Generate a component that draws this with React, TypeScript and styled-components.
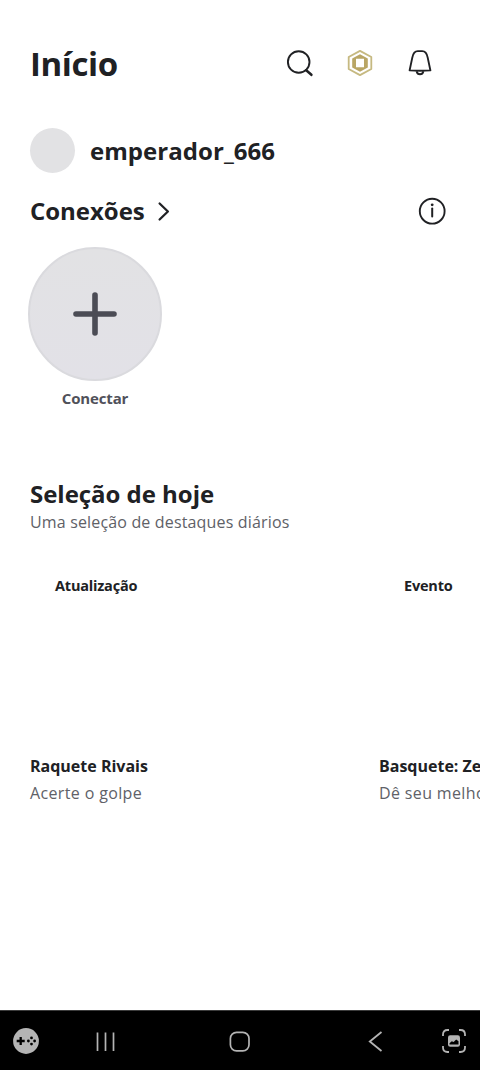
import React from "react";
import styled, { createGlobalStyle } from "styled-components";

const GlobalStyle = createGlobalStyle`
  * {
    box-sizing: border-box;
  }
  body {
    margin: 0;
    background: #fff;
    font-family: "Open Sans", "Noto Sans", sans-serif;
    color: #202124;
  }
  svg {
    display: block;
  }
`;

const Screen = styled.div`
  width: 100%;
  max-width: 480px;
  height: 1070px;
  display: flex;
  flex-direction: column;
  overflow: hidden;
  background: #fff;
`;

const Content = styled.main`
  flex: 1;
  min-height: 0;
  padding-left: 30px;
`;

const Header = styled.header`
  height: 128px;
  display: flex;
  align-items: center;
  justify-content: space-between;
  padding-right: 45px;
`;

const Title = styled.h1`
  margin: 0;
  font-size: 33px;
  line-height: 40px;
  font-weight: 700;
  letter-spacing: -0.4px;
  white-space: nowrap;
`;

const HeaderActions = styled.div`
  display: flex;
  gap: 30px;
`;

const IconButton = styled.button`
  width: 30px;
  height: 30px;
  padding: 0;
  border: 0;
  background: none;
  color: #202124;
`;

const Profile = styled.div`
  height: 45px;
  display: flex;
  align-items: center;
  gap: 15px;
`;

const Avatar = styled.div`
  width: 45px;
  height: 45px;
  border-radius: 50%;
  background: #e2e2e4;
`;

const Username = styled.span`
  font-size: 24px;
  line-height: 32px;
  font-weight: 700;
  letter-spacing: 0.05px;
`;

const ConnectionsBar = styled.div`
  height: 74px;
  display: flex;
  align-items: center;
  justify-content: space-between;
  padding: 2px 33px 0 0;
`;

const ConnectionsLink = styled.a`
  display: flex;
  align-items: center;
  gap: 11px;
`;

const SectionTitle = styled.h2`
  margin: 0;
  font-size: 24px;
  line-height: 32px;
  font-weight: 700;
  letter-spacing: -0.03px;
  white-space: nowrap;
`;

const Connect = styled.div`
  width: 134px;
  margin-left: -2px;
  display: flex;
  flex-direction: column;
  align-items: center;
`;

const ConnectCircle = styled.div`
  width: 134px;
  height: 134px;
  border: 2px solid #dadade;
  border-radius: 50%;
  background: linear-gradient(#e2e2e4, #e2e1e7);
  display: grid;
  place-items: center;
  color: #4b4c55;
`;

const ConnectLabel = styled.span`
  margin-top: 7px;
  font-size: 15px;
  line-height: 20px;
  font-weight: 700;
  letter-spacing: -0.15px;
  color: #50515a;
`;

const Today = styled.section`
  padding-top: 70px;
`;

const Subtitle = styled.p<{ $spacing?: number }>`
  margin: 0;
  font-size: 16px;
  line-height: 24px;
  letter-spacing: ${(p) => p.$spacing ?? 0}px;
  color: #606167;
  white-space: nowrap;
`;

const Cards = styled.div`
  display: flex;
  gap: 15px;
  margin-top: 42px;
`;

const Card = styled.article`
  flex: 0 0 334px;
  height: 229px;
  display: flex;
  flex-direction: column;
`;

const Tag = styled.span`
  padding-left: 25px;
  font-size: 14.5px;
  line-height: 20px;
  font-weight: 700;
  letter-spacing: -0.2px;
`;

const CardTitle = styled.h3`
  margin: auto 0 3px;
  font-size: 16px;
  line-height: 24px;
  font-weight: 700;
  white-space: nowrap;
`;

const NavBar = styled.nav`
  height: 60px;
  flex: none;
  display: flex;
  align-items: center;
  justify-content: space-between;
  padding: 1px 13px 0;
  border-top: 1px solid #3c3c3c;
  background: #000;
  color: #b4b4b4;
`;

const NavGroup = styled.div`
  display: flex;
  gap: 53px;
`;

const SearchIcon = () => (
  <svg width="30" height="30" viewBox="0 0 30 30" fill="none" stroke="currentColor">
    <circle cx="13.7" cy="13" r="10.8" strokeWidth="1.9" />
    <path d="M21.2 21.2l5.2 4.6" strokeWidth="2.5" strokeLinecap="round" />
  </svg>
);

const RobuxIcon = () => (
  <svg width="30" height="30" viewBox="0 0 30 30" fill="none" strokeLinejoin="round">
    <path d="M15 1.900L26.300 8v12L15 26.100 3.700 20V8z" stroke="#c6b981" strokeWidth="1.8" />
    <path
      d="M15 5.200l7.800 4.400v8.800L15 22.800l-7.800-4.400V9.600zM11 9.800v8.400h8V9.800z"
      fill="#b9a665"
      fillRule="evenodd"
    />
  </svg>
);

const BellIcon = () => (
  <svg width="30" height="30" viewBox="0 0 30 30" fill="none" stroke="currentColor" strokeLinejoin="round">
    <path
      d="M4.600 21.400L7.300 8.600C8.100 4.200 9.900 2.100 12.800 2.100h4.400c2.900 0 4.700 2.100 5.500 6.500l2.700 12.800q-10.400.8-20.800 0z"
      strokeWidth="1.9"
    />
    <path d="M11.600 22.200c.5 2.200 1.700 3.100 3.400 3.100s2.900-.9 3.400-3.100" strokeWidth="1.9" />
  </svg>
);

const ChevronIcon = () => (
  <svg width="15" height="22" viewBox="0 0 15 22" fill="none" stroke="currentColor">
    <path d="M3.600 3.500l8.300 8-8.300 8" strokeWidth="2.300" strokeLinecap="round" strokeLinejoin="round" />
  </svg>
);

const InfoIcon = () => (
  <svg width="30" height="30" viewBox="0 0 30 30" fill="none" stroke="currentColor">
    <circle cx="15.200" cy="15.200" r="12.400" strokeWidth="1.9" />
    <path d="M15.200 12.400v8.200" strokeWidth="2" strokeLinecap="round" />
    <circle cx="15.200" cy="8.800" r="1.400" fill="currentColor" stroke="none" />
  </svg>
);

const PlusIcon = () => (
  <svg width="44" height="44" viewBox="0 0 44 44" stroke="currentColor">
    <path d="M22 3v38M3 22h38" strokeWidth="5.6" strokeLinecap="round" />
  </svg>
);

const GamepadIcon = () => (
  <svg width="26" height="26" viewBox="0 0 26 26">
    <circle cx="13" cy="13" r="12.9" fill="currentColor" />
    <path d="M7.7 9v8M3.7 13h8" stroke="#000" strokeWidth="2.3" />
    <g fill="#000">
      <circle cx="18.5" cy="9.9" r="1.4" />
      <circle cx="18.5" cy="16.1" r="1.4" />
      <circle cx="15.4" cy="13" r="1.4" />
      <circle cx="21.6" cy="13" r="1.4" />
    </g>
  </svg>
);

const RecentsIcon = () => (
  <svg width="26" height="26" viewBox="0 0 26 26" stroke="currentColor">
    <path d="M5.5 4.5V23M13.500 4.500V23M21.500 4.500V23" strokeWidth="1.700" />
  </svg>
);

const HomeIcon = () => (
  <svg width="26" height="26" viewBox="0 0 26 26" fill="none" stroke="currentColor">
    <rect x="3.400" y="4.300" width="18.600" height="18.600" rx="6.200" strokeWidth="1.700" />
  </svg>
);

const BackIcon = () => (
  <svg width="26" height="26" viewBox="0 0 26 26" fill="none" stroke="currentColor">
    <path d="M19.500 4L7.800 13.500l11.700 9.500" strokeWidth="1.800" />
  </svg>
);

const CaptureIcon = () => (
  <svg width="26" height="26" viewBox="0 0 26 26" fill="none" stroke="currentColor">
    <path
      d="M2 8V6.5Q2 2 6.5 2H8M18 2h1.500Q24 2 24 6.500V8M24 18v1.500Q24 24 19.500 24H18M8 24H6.500Q2 24 2 19.500V18"
      strokeWidth="1.8"
    />
    <rect x="7" y="7.200" width="12" height="11.600" rx="2.200" fill="currentColor" stroke="none" />
    <path d="M8.500 16.600v-1.400l2.300-2 1.800.8 2.600-2.400 2.300 1.600v3.400z" fill="#000" stroke="none" />
  </svg>
);

const cards = [
  { tag: "Atualização", title: "Raquete Rivais", text: "Acerte o golpe" },
  { tag: "Evento", title: "Basquete: Zero", text: "Dê seu melhor" },
];

const App: React.FC = () => {
  return (
    <>
      <GlobalStyle />
      <Screen>
        <Content>
          <Header>
            <Title>Início</Title>
            <HeaderActions>
              <IconButton aria-label="Buscar"><SearchIcon /></IconButton>
              <IconButton aria-label="Robux"><RobuxIcon /></IconButton>
              <IconButton aria-label="Notificações"><BellIcon /></IconButton>
            </HeaderActions>
          </Header>
          <Profile>
            <Avatar />
            <Username>emperador_666</Username>
          </Profile>
          <ConnectionsBar>
            <ConnectionsLink>
              <SectionTitle>Conexões</SectionTitle>
              <ChevronIcon />
            </ConnectionsLink>
            <IconButton aria-label="Informações"><InfoIcon /></IconButton>
          </ConnectionsBar>
          <Connect>
            <ConnectCircle><PlusIcon /></ConnectCircle>
            <ConnectLabel>Conectar</ConnectLabel>
          </Connect>
          <Today>
            <SectionTitle>Seleção de hoje</SectionTitle>
            <Subtitle $spacing={0.16}>Uma seleção de destaques diários</Subtitle>
            <Cards>
              {cards.map((card) => (
                <Card key={card.tag}>
                  <Tag>{card.tag}</Tag>
                  <CardTitle>{card.title}</CardTitle>
                  <Subtitle $spacing={0.36}>{card.text}</Subtitle>
                </Card>
              ))}
            </Cards>
          </Today>
        </Content>
        <NavBar>
          <NavGroup>
            <GamepadIcon />
            <RecentsIcon />
          </NavGroup>
          <HomeIcon />
          <NavGroup>
            <BackIcon />
            <CaptureIcon />
          </NavGroup>
        </NavBar>
      </Screen>
    </>
  );
};

export default App;
